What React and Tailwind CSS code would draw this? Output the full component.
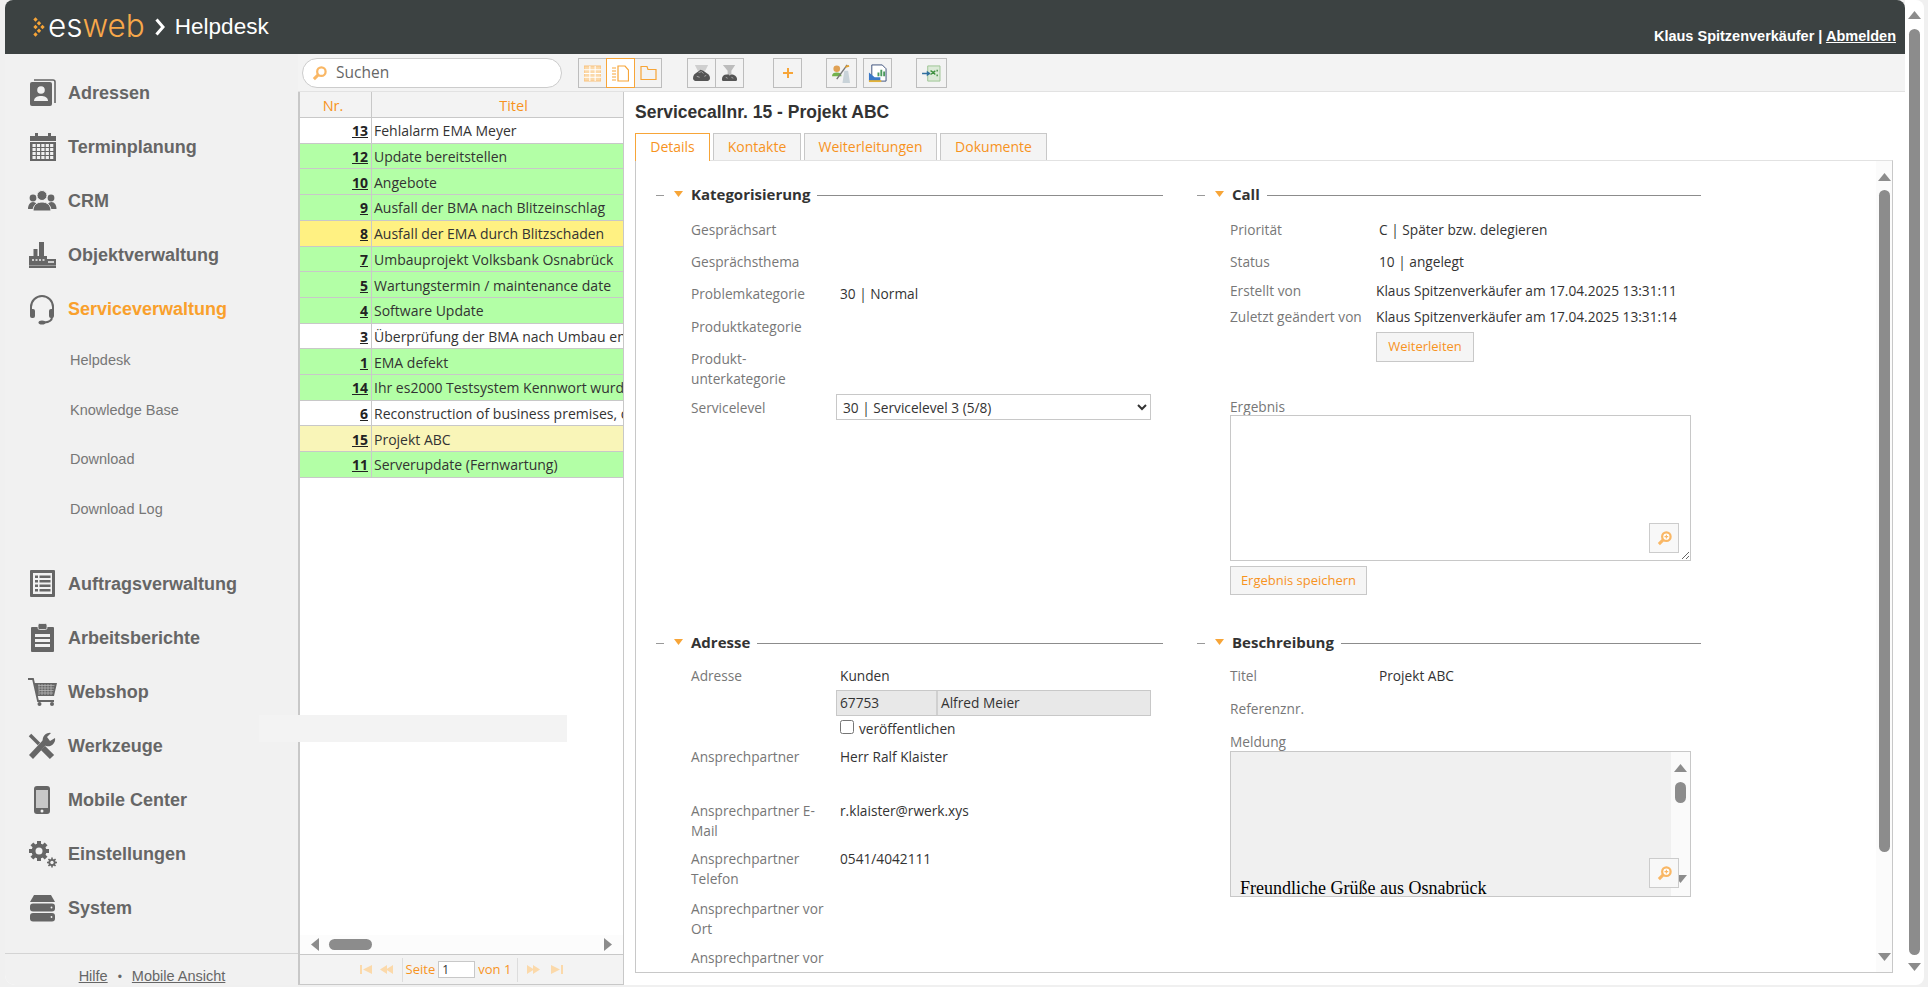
import { Fragment } from "react";

const ORANGE = "#f7a538";
const NAV_GRAY = "#666666";

// Navigation icons are hand drawn, none of the packages has these shapes
function NavIcon({ children }) {
  return (
    <svg viewBox="0 0 30 32" className="w-[30px] h-[32px] shrink-0" fill={NAV_GRAY}>
      {children}
    </svg>
  );
}

const icons = {
  adressen: (
    <NavIcon>
      <path d="M7 3h19a2 2 0 0 1 2 2v21" fill="none" stroke={NAV_GRAY} strokeWidth="1.6" />
      <rect x="3" y="5" width="22" height="24" rx="2" />
      <circle cx="14" cy="13" r="3.8" fill="#f1f1f1" />
      <path d="M7 24c0-4 4-5 7-5s7 1 7 5z" fill="#f1f1f1" />
    </NavIcon>
  ),
  termin: (
    <NavIcon>
      <rect x="3" y="5" width="26" height="5" />
      <rect x="8" y="2" width="3" height="4" />
      <rect x="21" y="2" width="3" height="4" />
      <rect x="3" y="11" width="26" height="19" />
      {[0, 1, 2, 3, 4].map((c) =>
        [0, 1, 2, 3].map((r) => (
          <rect key={`${c}-${r}`} x={5.5 + c * 4.4} y={13 + r * 4} width="3.2" height="3" fill="#f1f1f1" />
        ))
      )}
    </NavIcon>
  ),
  crm: (
    <NavIcon>
      <circle cx="6" cy="13" r="3.4" />
      <circle cx="24" cy="13" r="3.4" />
      <path d="M1 24c0-4 2-7 5-7s5 3 5 7z" />
      <path d="M29.500 24c0-4-2-7-5-7s-5 3-5 7z" />
      <circle cx="15" cy="10.500" r="5" stroke="#f1f1f1" strokeWidth="1" />
      <path d="M6 26c0-6 4-9 9-9s9 3 9 9z" stroke="#f1f1f1" strokeWidth="1" />
    </NavIcon>
  ),
  objekt: (
    <NavIcon>
      <rect x="12" y="3" width="5" height="14" />
      <rect x="6.500" y="10" width="4" height="7" />
      <path d="M2 29V17h18v3h9v9z" />
      <path d="M5 21h2M8.500 21h2M12 21h2M15.500 21h2M21 23h6" stroke="#f1f1f1" strokeWidth="1.5" />
      <rect x="2" y="26" width="27" height="1" fill="#999" />
    </NavIcon>
  ),
  service: (
    <NavIcon>
      <path d="M4 20v-6a11 11 0 0 1 22 0v6" fill="none" stroke={NAV_GRAY} strokeWidth="2" />
      <rect x="3" y="16" width="5" height="9" rx="2" />
      <rect x="22" y="16" width="5" height="9" rx="2" />
      <path d="M25 24q0 5-8 5.500" fill="none" stroke={NAV_GRAY} strokeWidth="2" />
      <ellipse cx="15" cy="29.500" rx="3.500" ry="2" />
    </NavIcon>
  ),
  auftrag: (
    <NavIcon>
      <rect x="3" y="2" width="25" height="27" rx="1" />
      <rect x="6" y="5" width="19" height="21" fill="#f1f1f1" />
      {[7.5, 12, 16.5, 21].map((y) => (
        <Fragment key={y}>
          <rect x="8" y={y} width="3" height="2.500" />
          <rect x="12.500" y={y} width="11" height="2.500" />
        </Fragment>
      ))}
    </NavIcon>
  ),
  bericht: (
    <NavIcon>
      <rect x="4" y="5" width="23" height="25" rx="1" />
      <rect x="11" y="1.500" width="9" height="6" rx="1.500" stroke="#f1f1f1" strokeWidth="0.800" />
      <rect x="8" y="12" width="15" height="3" fill="#f1f1f1" />
      <rect x="8" y="17" width="15" height="3" fill="#f1f1f1" />
      <rect x="8" y="22" width="15" height="3" fill="#f1f1f1" />
    </NavIcon>
  ),
  shop: (
    <NavIcon>
      <path d="M1 3h5l5 22h16" fill="none" stroke={NAV_GRAY} strokeWidth="1.800" />
      <path d="M7.500 7H30l-3 13H10z" />
      <path d="M11 9.500h16.500M11.500 12h15.500M12 14.500h14.500M12.500 17h13.500" stroke="#bbb" strokeWidth="0.700" />
      <path d="M12 8v11M15 8v11M18 8v11M21 8v11M24 8v11" stroke="#bbb" strokeWidth="0.700" />
      <circle cx="12.500" cy="28" r="2" />
      <circle cx="25" cy="28" r="2" />
    </NavIcon>
  ),
  tools: (
    <NavIcon>
      <path d="M4 27L19 11" stroke={NAV_GRAY} strokeWidth="5.500" />
      <path d="M16 12a7 7 0 0 1 8-9l-4 4 3 4 5-3a7 7 0 0 1-9 8z" />
      <path d="M3 5l9 9" stroke={NAV_GRAY} strokeWidth="3.500" />
      <path d="M16 18l9 9" stroke={NAV_GRAY} strokeWidth="6" />
    </NavIcon>
  ),
  mobile: (
    <NavIcon>
      <rect x="7" y="2" width="16" height="28" rx="3" />
      <rect x="9" y="6" width="12" height="18" fill="#c8c8c8" />
      <circle cx="15" cy="27" r="1.500" fill="#f1f1f1" />
    </NavIcon>
  ),
  settings: (
    <NavIcon>
      {[0, 45, 90, 135].map((a) => (
        <rect key={a} x="10" y="3" width="4" height="20" transform={`rotate(${a} 12 13)`} />
      ))}
      <circle cx="12" cy="13" r="7.500" />
      <circle cx="12" cy="13" r="3.500" fill="#f1f1f1" />
      {[0, 45, 90, 135].map((a) => (
        <rect key={a} x="24.200" y="19.500" width="1.600" height="10" transform={`rotate(${a} 25 24.500)`} />
      ))}
      <circle cx="25" cy="24.500" r="3.600" />
      <circle cx="25" cy="24.500" r="1.700" fill="#f1f1f1" />
    </NavIcon>
  ),
  system: (
    <NavIcon>
      <path d="M7 3h17l4 7H3z" />
      <rect x="3" y="11.500" width="25" height="8" rx="3" />
      <rect x="3" y="21" width="25" height="8.500" rx="3" />
      <circle cx="24.500" cy="15.500" r="0.900" fill="#f1f1f1" />
      <circle cx="24.500" cy="25" r="0.900" fill="#f1f1f1" />
    </NavIcon>
  ),
};

const navTop = [
  { label: "Adressen", icon: "adressen" },
  { label: "Terminplanung", icon: "termin" },
  { label: "CRM", icon: "crm" },
  { label: "Objektverwaltung", icon: "objekt" },
  { label: "Serviceverwaltung", icon: "service", active: true },
];
const navSub = ["Helpdesk", "Knowledge Base", "Download", "Download Log"];
const navBottom = [
  { label: "Auftragsverwaltung", icon: "auftrag" },
  { label: "Arbeitsberichte", icon: "bericht" },
  { label: "Webshop", icon: "shop" },
  { label: "Werkzeuge", icon: "tools" },
  { label: "Mobile Center", icon: "mobile" },
  { label: "Einstellungen", icon: "settings" },
  { label: "System", icon: "system" },
];

const GREEN = "bg-[#b3ffa6]";
const WHITE = "bg-white";
const rows = [
  { nr: 13, title: "Fehlalarm EMA Meyer", bg: WHITE },
  { nr: 12, title: "Update bereitstellen", bg: GREEN },
  { nr: 10, title: "Angebote", bg: GREEN },
  { nr: 9, title: "Ausfall der BMA nach Blitzeinschlag", bg: GREEN },
  { nr: 8, title: "Ausfall der EMA durch Blitzschaden", bg: "bg-[#fff182]" },
  { nr: 7, title: "Umbauprojekt Volksbank Osnabrück", bg: GREEN },
  { nr: 5, title: "Wartungstermin / maintenance date", bg: GREEN },
  { nr: 4, title: "Software Update", bg: GREEN },
  { nr: 3, title: "Überprüfung der BMA nach Umbau entsprechend", bg: WHITE },
  { nr: 1, title: "EMA defekt", bg: GREEN },
  { nr: 14, title: "Ihr es2000 Testsystem Kennwort wurde geändert", bg: GREEN },
  { nr: 6, title: "Reconstruction of business premises, office", bg: WHITE },
  { nr: 15, title: "Projekt ABC", bg: "bg-[#f9f5b8]" },
  { nr: 11, title: "Serverupdate (Fernwartung)", bg: GREEN },
];

// diamonds of the logo mark: [x, y] centres
const logoDots = [[2.5, 2.5], [2.5, 10], [2.5, 17.5], [6, 6.25], [6, 13.75], [9.5, 10]];

function Triangle({ dir = "up", className = "" }) {
  const d = { up: "M0 8L6.500 0 13 8z", down: "M0 0h13L6.500 8z", left: "M8 0v13L0 6.500z", right: "M0 0l8 6.500L0 13z" }[dir];
  const box = dir === "up" || dir === "down" ? "0 0 13 8" : "0 0 8 13";
  const size = dir === "up" || dir === "down" ? "w-[13px] h-[8px]" : "w-[8px] h-[13px]";
  return (
    <svg viewBox={box} className={`${size} shrink-0 ${className}`} fill="#8c8c8c">
      <path d={d} />
    </svg>
  );
}

function Magnifier({ plus = false }) {
  return (
    <svg viewBox="0 0 16 16" className="w-[15px] h-[15px]" fill="none" stroke="#f9b765">
      <circle cx="10" cy="6" r="4.500" strokeWidth="2.400" fill="#fff" />
      <path d="M6.500 9.500L2 14" strokeWidth="3.200" />
      {plus && <path d="M8 6h4M10 4v4" strokeWidth="1.200" />}
    </svg>
  );
}

function ToolButton({ w, active, children }) {
  return (
    <div
      style={{ width: w }}
      className={`h-[30px] -ml-px first:ml-0 flex items-center justify-center border ${
        active ? "bg-white border-[#f7a538] relative" : "bg-[#f3f3f3] border-[#bdbdbd]"
      }`}
    >
      {children}
    </div>
  );
}

function Toolbar() {
  return (
    <div className="h-[38px] shrink-0 bg-[#f3f3f3] border-b border-[#e2e2e2] flex items-start pt-[4px] pl-[4px]">
      <div className="w-[260px] h-[30px] rounded-full border border-[#cccccc] bg-white flex items-center pl-[9px] gap-[9px]">
        <Magnifier />
        <span className="text-[15.500px] text-[#666] font-['Open_Sans',sans-serif]">Suchen</span>
      </div>

      <div className="flex ml-[16px]">
        <ToolButton w={29}>
          <svg viewBox="0 0 16 16" className="w-[17px] h-[17px]" stroke="#f9c27c" fill="#fbd9aa" strokeWidth="1">
            <path d="M0 1h16v14H0z" />
            <path d="M0 4.500h16M0 8h16M0 11.500h16M5.500 1v14M10.500 1v14" fill="none" stroke="#fff" />
          </svg>
        </ToolButton>
        <ToolButton w={29} active>
          <svg viewBox="0 0 17 17" className="w-[17px] h-[17px]" fill="none" stroke="#f7a538" strokeWidth="1.200">
            <path d="M0 3h4M0 6h4M0 9h4M0 12h4M0 15h4" />
            <path d="M6 1h7l3.500 4v11H6z" />
          </svg>
        </ToolButton>
        <ToolButton w={28}>
          <svg viewBox="0 0 17 16" className="w-[17px] h-[16px]" fill="none" stroke="#f7a538" strokeWidth="1.200">
            <path d="M1 14.500V1.500h6l1 3h8v10z" />
          </svg>
        </ToolButton>
      </div>

      <div className="flex ml-[25px]">
        <ToolButton w={29}>
          <svg viewBox="0 0 20 18" className="w-[19px] h-[17px]">
            <path d="M3 0h14l-3 6H6z" fill="#cfcfcf" />
            <path d="M1 14c0-3 2-5 4-6l4-3 3 1 4 3c2 1 3 3 3 5 0 2-2 3-4 3H5c-2 0-4-1-4-3z" fill="#555" />
            <path d="M7 8l3-1 2 2M5 12l3 1M13 12l2-1" stroke="#aaa" strokeWidth="1" fill="none" />
          </svg>
        </ToolButton>
        <ToolButton w={29}>
          <svg viewBox="0 0 20 18" className="w-[19px] h-[17px]">
            <path d="M3 0h13l-4 6v5H8V6z" fill="#bdbdbd" />
            <path d="M2 15c0-3 2-5 5-5h2l1 1 2-1c3 0 6 2 6 5 0 2-1 2-3 2H5c-2 0-3 0-3-2z" fill="#555" />
            <path d="M6 13l2 1M12 13l2 1" stroke="#aaa" strokeWidth="1" fill="none" />
          </svg>
        </ToolButton>
      </div>

      <div className="flex ml-[29px]">
        <ToolButton w={29}>
          <svg viewBox="0 0 10 10" className="w-[10px] h-[10px]" stroke="#f7a538" strokeWidth="2">
            <path d="M0 5h10M5 0v10" />
          </svg>
        </ToolButton>
      </div>

      <div className="flex ml-[24px]">
        <ToolButton w={31}>
          <svg viewBox="0 0 20 20" className="w-[19px] h-[19px]">
            <path d="M11 20l2-13h4l2 13z" fill="#c9d3d9" />
            <circle cx="5" cy="5" r="3.500" fill="#e0a154" />
            <path d="M0 13c0-3 2-4 5-4s5 1 5 4z" fill="#74b24d" />
            <path d="M16 1L5 16" stroke="#777" strokeWidth="1.500" />
            <path d="M18 2l-4 1" stroke="#e3a02f" strokeWidth="2" />
          </svg>
        </ToolButton>
      </div>
      <div className="flex ml-[6px]">
        <ToolButton w={29}>
          <svg viewBox="0 0 20 20" className="w-[19px] h-[19px]">
            <path d="M4 1h11l4 4v13H4z" fill="#fff" stroke="#3b4f7a" />
            <path d="M1 9l6 5h6v4H1z" fill="#3a78c8" />
            <path d="M10 13h2V9h-2zM13 13h2V6h-2zM16 13h2V8h-2z" fill="#4a9a5d" />
            <rect x="1" y="17" width="13" height="2" fill="#e3b23a" />
          </svg>
        </ToolButton>
      </div>
      <div className="flex ml-[24px]">
        <ToolButton w={31}>
          <svg viewBox="0 0 20 18" className="w-[19px] h-[17px]">
            <path d="M6 1h13v16H6z" fill="#dcead8" stroke="#9cc493" />
            <path d="M9 6l3 2-3 2M14 6l-2 2 2 2M16 5v2M16 10v2" fill="none" stroke="#3d8f3d" strokeWidth="1.400" />
            <path d="M0 9h8" stroke="#2f6f9f" strokeWidth="1.600" />
            <path d="M5 6l4 3-4 3z" fill="#2f6f9f" />
          </svg>
        </ToolButton>
      </div>
    </div>
  );
}

function Sidebar() {
  const item = (n) => (
    <div key={n.label} className="h-[54px] flex items-center pl-[22px] gap-[11px]">
      {icons[n.icon]}
      <span className={`text-[18px] font-bold ${n.active ? "text-[#f9a02c]" : "text-[#666]"}`}>{n.label}</span>
    </div>
  );
  return (
    <aside className="w-[293px] shrink-0 bg-[#f1f1f1] flex flex-col pt-[12px] rounded-bl-[10px] font-['Liberation_Sans',sans-serif]">
      {navTop.map(item)}
      <div className="mb-[23px]">
        {navSub.map((s) => (
          <div key={s} className="h-[49.600px] flex items-center pl-[65px] text-[14.500px] text-[#777]">
            {s}
          </div>
        ))}
      </div>
      {navBottom.map(item)}
      <div className="mt-auto h-[32px] border-t border-[#d4d4d4] flex items-center justify-center gap-[10px] pl-[1px] pt-[14px] text-[14.500px] text-[#666]">
        <span className="underline">Hilfe</span>
        <span className="text-[12px]">•</span>
        <span className="underline">Mobile Ansicht</span>
      </div>
    </aside>
  );
}

function PagerIcon({ d }) {
  return (
    <svg viewBox="0 0 13 9" className="w-[13px] h-[9px]" fill="#fbd9aa">
      <path d={d} />
    </svg>
  );
}

function ListPanel() {
  return (
    <div className="w-[326px] shrink-0 flex flex-col border-x-2 border-x-[#c8c8c8] border-r border-b border-b-[#c8c8c8] font-['Open_Sans',sans-serif]">
      <div className="h-[26px] shrink-0 flex bg-[#f3f3f3] border-b border-[#c8c8c8] text-[14.500px] text-[#f7931e]">
        <div className="w-[72px] border-r border-[#c8c8c8] flex items-center justify-center pr-[5px] pt-[2px]">Nr.</div>
        <div className="flex-1 flex items-center justify-center pl-[32px] pt-[2px]">Titel</div>
      </div>
      {rows.map((r) => (
        <div key={r.nr} className={`h-[25.710px] shrink-0 flex border-b border-[#c8c8c8] text-[14px] text-[#333] ${r.bg}`}>
          <div className="w-[72px] shrink-0 border-r border-[#c8c8c8] flex items-center justify-end pr-[3px] pt-[1px] font-bold underline text-[#222]">
            {r.nr}
          </div>
          <div className="flex-1 min-w-0 flex items-center pl-[2px] pt-[1px] whitespace-nowrap overflow-hidden">{r.title}</div>
        </div>
      ))}
      <div className="flex-1" />
      <div className="h-[19px] shrink-0 bg-[#fcfcfc] flex items-center pl-[11px] pr-[11px]">
        <Triangle dir="left" />
        <div className="w-[43px] h-[11px] rounded-full bg-[#8c8c8c] ml-[10px]" />
        <Triangle dir="right" className="ml-auto" />
      </div>
      <div className="h-[30px] shrink-0 bg-[#f3f3f3] border-t border-[#c8c8c8] flex items-center justify-center text-[13px] text-[#f7931e]">
        <PagerIcon d="M0 0h2v9H0zM12 0v9L3 4.500z" />
        <span className="w-[7px]" />
        <PagerIcon d="M7 0v9L0 4.500zM13 0v9L6 4.500z" />
        <span className="w-px h-[24px] bg-[#dddddd] ml-[9px] mr-[3px]" />
        <span>Seite</span>
        <span className="w-[37px] h-[17px] ml-[3px] mr-[3px] bg-white border border-[#c8c8c8] text-[12px] leading-[15px] pl-[3px] text-[#333]">1</span>
        <span>von 1</span>
        <span className="w-px h-[24px] bg-[#dddddd] ml-[6px] mr-[9px]" />
        <PagerIcon d="M0 0v9l7-4.500zM6 0v9l7-4.500z" />
        <span className="w-[10px]" />
        <PagerIcon d="M1 0v9l9-4.500zM11 0h2v9h-2z" />
      </div>
    </div>
  );
}

function Legend({ title }) {
  return (
    <div className="h-[18px] flex items-center">
      <span className="w-[8px] h-px bg-[#999]" />
      <svg viewBox="0 0 9 6" className="w-[9px] h-[6px] ml-[10px] mr-[8px] -mt-[2px]" fill={ORANGE}>
        <path d="M0 0h9L4.500 6z" />
      </svg>
      <span className="text-[15px] font-bold text-[#333] whitespace-nowrap mr-[7px] -mt-[1px]">{title}</span>
      <span className="flex-1 h-px bg-[#8c8c8c]" />
    </div>
  );
}

function Field({ label, value, h = 32, col = 145, pad = 4, left = 35, children }) {
  return (
    <div style={{ height: h, gridTemplateColumns: `${col}px 1fr`, paddingLeft: left }} className="grid items-start">
      <div className="pt-[6px] leading-[20px] text-[#777] pr-[6px]">{label}</div>
      <div style={{ paddingLeft: pad }} className="pt-[6px] leading-[20px] text-[#333] whitespace-nowrap">
        {value}
        {children}
      </div>
    </div>
  );
}

function ActionButton({ children, className = "" }) {
  return (
    <div className={`flex items-center justify-center border border-[#c8c8c8] bg-[#f5f5f5] text-[13px] text-[#f7931e] ${className}`}>
      {children}
    </div>
  );
}

function ZoomButton({ className }) {
  return (
    <div className={`absolute w-[30px] h-[30px] border border-[#cccccc] bg-[#f8f8f8] flex items-center justify-center ${className}`}>
      <Magnifier plus />
    </div>
  );
}

function DetailPanel() {
  return (
    <div className="flex-1 min-w-0 flex flex-col pl-[11px] pr-[12px] pb-[12px] font-['Open_Sans',sans-serif]">
      <div className="h-[41px] shrink-0 flex items-center text-[17.500px] font-bold text-[#333] font-['Liberation_Sans',sans-serif]">
        Servicecallnr. 15 - Projekt ABC
      </div>
      <div className="h-[27px] shrink-0 flex gap-[3px] text-[14px] text-[#f7931e]">
        <div className="w-[75px] h-[28px] pb-[2px] bg-white border border-b-0 border-[#f7a538] flex items-center justify-center relative z-10">Details</div>
        <div className="w-[88px] pb-[2px] bg-[#f4f4f4] border border-b-0 border-[#c8c8c8] flex items-center justify-center">Kontakte</div>
        <div className="w-[133px] pb-[2px] bg-[#f4f4f4] border border-b-0 border-[#c8c8c8] flex items-center justify-center">Weiterleitungen</div>
        <div className="w-[107px] pb-[2px] bg-[#f4f4f4] border border-b-0 border-[#c8c8c8] flex items-center justify-center">Dokumente</div>
      </div>

      <div className="flex-1 min-h-0 border border-[#c8c8c8] border-t-[#e2e2e2] flex overflow-hidden text-[13.700px]">
        <div className="flex-1 min-w-0 pt-[25px] pl-[20px] grid grid-cols-[507px_504px] grid-rows-[448px_auto] gap-x-[34px]">
          {/* Kategorisierung */}
          <section>
            <Legend title="Kategorisierung" />
            <div className="mt-[10px]">
              <Field label="Gesprächsart" />
              <Field label="Gesprächsthema" />
              <Field label="Problemkategorie" value="30 | Normal" h={33} />
              <Field label="Produktkategorie" />
              <Field label={<>Produkt-<br />unterkategorie</>} h={49} />
              <div className="grid grid-cols-[145px_1fr] pl-[35px]">
                <div className="pt-[6px] leading-[20px] text-[#777]">Servicelevel</div>
                <select className="mt-[2px] w-[315px] h-[26px] border border-[#c8c8c8] bg-white pl-[2px] text-[#333]" defaultValue="30">
                  <option value="30">30 | Servicelevel 3 (5/8)</option>
                </select>
              </div>
            </div>
          </section>

          {/* Call */}
          <section>
            <Legend title="Call" />
            <div className="mt-[10px]">
              <Field label="Priorität" value="C | Später bzw. delegieren" col={149} pad={0} left={33} />
              <Field label="Status" value="10 | angelegt" col={149} pad={0} left={33} h={29} />
              <Field label="Erstellt von" value="Klaus Spitzenverkäufer am 17.04.2025 13:31:11" col={146} pad={0} left={33} h={26} />
              <Field label="Zuletzt geändert von" value="Klaus Spitzenverkäufer am 17.04.2025 13:31:14" col={146} pad={0} left={33} h={26} />
              <div className="pl-[179px] mt-[5px]">
                <ActionButton className="w-[98px] h-[30px]">Weiterleiten</ActionButton>
              </div>
              <div className="pl-[33px] mt-[34px] w-[494px]">
                <div className="h-[19px] leading-[21px] text-[#777]">Ergebnis</div>
                <div className="relative h-[146px]">
                  <textarea className="block w-full h-full border border-[#c8c8c8] bg-white outline-none" />
                  <ZoomButton className="left-[419px] top-[108px]" />
                </div>
                <ActionButton className="mt-[5px] w-[137px] h-[29px]">Ergebnis speichern</ActionButton>
              </div>
            </div>
          </section>

          {/* Adresse */}
          <section>
            <Legend title="Adresse" />
            <div className="mt-[8px]">
              <Field label="Adresse" h={81}>
                Kunden
                <div className="-ml-[4px] mt-[4px] w-[315px] h-[26px] flex border border-[#c8c8c8] bg-[#e8e8e8]">
                  <div className="w-[101px] border-r-2 border-[#d0d0d0] flex items-center pl-[3px]">67753</div>
                  <div className="flex-1 flex items-center pl-[3px]">Alfred Meier</div>
                </div>
                <label className="mt-[2px] flex items-center gap-[5px] h-[22px]">
                  <input type="checkbox" className="w-[14px] h-[14px] -mt-[4px]" />
                  veröffentlichen
                </label>
              </Field>
              <Field label="Ansprechpartner" value="Herr Ralf Klaister" h={54} />
              <Field label="Ansprechpartner E-Mail" value="r.klaister@rwerk.xys" h={48} />
              <Field label="Ansprechpartner Telefon" value="0541/4042111" h={50} />
              <Field label="Ansprechpartner vor Ort" h={49} />
              <Field label="Ansprechpartner vor Ort E-Mail" h={49} />
            </div>
          </section>

          {/* Beschreibung */}
          <section>
            <Legend title="Beschreibung" />
            <div className="mt-[8px]">
              <Field label="Titel" value="Projekt ABC" col={149} pad={0} left={33} h={33} />
              <Field label="Referenznr." col={149} pad={0} left={33} h={33} />
              <div className="pl-[33px] w-[494px] mt-[6px]">
                <div className="h-[19px] leading-[19px] text-[#777]">Meldung</div>
                <div className="relative h-[146px] border border-[#c8c8c8] flex">
                  <div className="flex-1 bg-[#f0f0f0] flex items-end pl-[9px] overflow-hidden text-[18px] leading-[16px] text-black font-['Liberation_Serif',serif]">
                    Freundliche Grüße aus Osnabrück
                  </div>
                  <div className="w-[19px] bg-[#fafafa] flex flex-col items-center pt-[12px] pb-[13px]">
                    <Triangle dir="up" />
                    <div className="w-[11px] h-[21px] mt-[10px] rounded-full bg-[#8c8c8c]" />
                    <Triangle dir="down" className="mt-auto" />
                  </div>
                  <ZoomButton className="left-[418px] top-[106px]" />
                </div>
              </div>
            </div>
          </section>
        </div>

        <div className="w-[16px] shrink-0 bg-[#fbfbfb] flex flex-col items-center pt-[12px] pb-[11px]">
          <Triangle dir="up" />
          <div className="w-[11px] h-[662px] mt-[9px] rounded-full bg-[#8c8c8c]" />
          <Triangle dir="down" className="mt-auto" />
        </div>
      </div>
    </div>
  );
}

export default function App() {
  return (
    <div className="relative w-[1928px] h-[987px] overflow-hidden bg-[#f0f0f0] flex font-['Liberation_Sans',sans-serif]">
      <div className="ml-[5px] w-[1900px] h-[985px] bg-white flex flex-col rounded-t-[8px] rounded-bl-[10px]">
        <header className="h-[54px] shrink-0 bg-[#3c4242] rounded-t-[8px] flex items-center pl-[28px] pr-[9px]">
          <svg viewBox="0 0 12 20" className="w-[12px] h-[20px] -mt-[1px]" fill={ORANGE}>
            {logoDots.map(([x, y]) => (
              <path key={`${x}-${y}`} d={`M${x} ${y - 2.2}l2.200 2.200-2.200 2.200-2.200-2.200z`} />
            ))}
          </svg>
          <span className="ml-[3px] text-[31.500px] font-light leading-none font-['Inter',sans-serif] text-white -mt-[3px]">
            es<span className="text-[#f7a84a]">web</span>
          </span>
          <svg viewBox="0 0 10 18" className="w-[10px] h-[18px] ml-[10px] -mt-[1px]" fill="none" stroke="#fff" strokeWidth="3">
            <path d="M1.500 1.500L8 9l-6.500 7.500" />
          </svg>
          <span className="ml-[10px] text-[22.500px] text-white -mt-[1px]">Helpdesk</span>
          <div className="ml-auto self-end pb-[6px] text-[14.500px] font-bold text-white">
            Klaus Spitzenverkäufer | <span className="underline">Abmelden</span>
          </div>
        </header>

        <div className="flex-1 min-h-0 flex">
          <Sidebar />
          <div className="flex-1 min-w-0 flex flex-col">
            <Toolbar />
            <div className="flex-1 min-h-0 flex">
              <ListPanel />
              <DetailPanel />
            </div>
          </div>
        </div>
      </div>

      {/* page scrollbar */}
      <div className="w-[19px] h-[985px] bg-white rounded-r-[8px] flex flex-col items-center pt-[11px] pb-[14px]">
        <Triangle dir="up" />
        <div className="w-[11px] h-[926px] mt-[10px] rounded-full bg-[#8c8c8c]" />
        <Triangle dir="down" className="mt-auto" />
      </div>

      {/* stray tooltip patch that lies over sidebar and list */}
      <div className="absolute left-[259px] top-[715px] w-[308px] h-[27px] bg-[#f3f3f3]" />
    </div>
  );
}
